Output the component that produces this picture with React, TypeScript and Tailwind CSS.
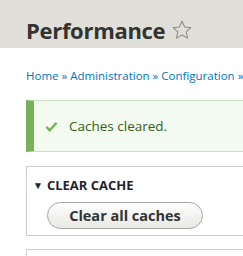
export default function App() {
  return (
    <div className="w-[243px] h-[256px] overflow-hidden bg-white font-['Open_Sans',sans-serif]">
      {/* Header */}
      <div className="h-[48px] bg-[#e0e0d8] pl-[26px] pt-[16px]">
        <h1 className="flex items-center text-[22px] font-bold leading-[28px] text-[#333] tracking-[-0.3px]">
          Performance
          <svg className="ml-[6px] h-[22px] w-[22px]" viewBox="0 0 24 24" fill="none" stroke="#8a8a85" strokeWidth="1.1" strokeLinejoin="round">
            <path d="M12 2.5l2.9 6.3 6.8.7-5.1 4.6 1.5 6.7L12 17.4l-6.1 3.4 1.5-6.7-5.1-4.6 6.8-.7z" />
          </svg>
        </h1>
      </div>

      <div className="w-[400px] pl-[26px]">
        {/* Breadcrumb */}
        <div className="mt-[20px] whitespace-nowrap text-[11.5px] leading-[16px] text-[#0074bd]">
          Home » Administration » Configuration » Development
        </div>

        {/* Status message */}
        <div className="mt-[16px] flex h-[52px] items-center border border-l-[8px] border-[#c9e1bd] border-l-[#77b259] bg-[#f3faef] pl-[11px]">
          <svg className="h-[13px] w-[13px]" viewBox="0 0 14 14">
            <path d="M1.5 7.5l3.5 3.5 7.5-8" fill="none" stroke="#73b355" strokeWidth="2.6" />
          </svg>
          <span className="ml-[11px] text-[13.5px] text-[#325e1c]">Caches cleared.</span>
        </div>

        {/* Clear cache fieldset */}
        <div className="mt-[14px] h-[70px] border border-[#ccc] pl-[6px] pt-[10px]">
          <div className="flex items-center text-[13px] font-bold leading-[16px] text-[#222330]">
            <span className="mr-[4px] text-[10px]">▼</span>
            CLEAR CACHE
          </div>
          <button className="ml-[14px] mt-[9px] h-[27px] w-[156px] rounded-full border border-[#a6a6a6] bg-gradient-to-b from-[#fefefe] to-[#e8e8e4] text-[14.5px] font-bold text-[#333]">
            Clear all caches
          </button>
        </div>

        {/* Next fieldset */}
        <div className="mt-[13px] h-[40px] border border-[#ccc]" />
      </div>
    </div>
  )
}
